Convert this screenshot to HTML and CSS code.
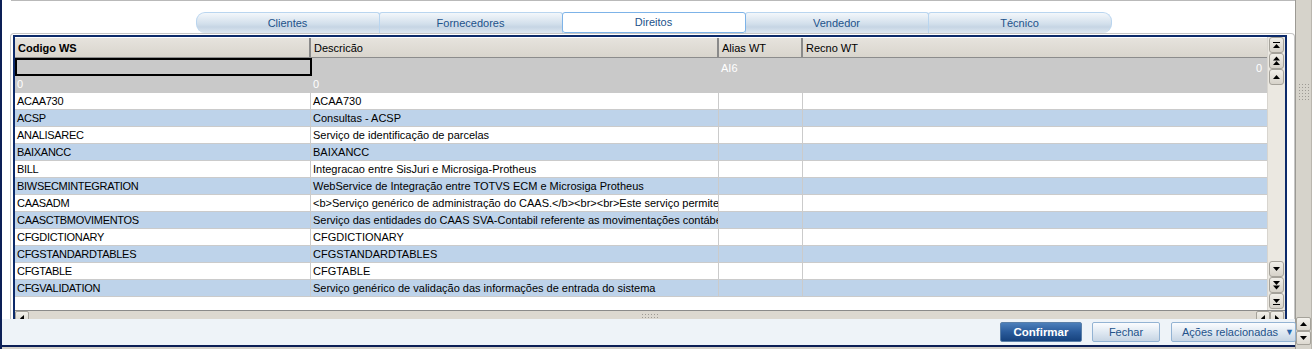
FILE: index.html
```html
<!DOCTYPE html>
<html lang="pt">
<head>
    <meta charset="UTF-8">
    <title>Direitos</title>
    <link rel="stylesheet" href="styles.css">
</head>
<body>
    <div class="window">
        <div class="main">
            <div class="workspace">
                <div class="topline"></div>
                <div class="tabs">
                    <div class="tab tab-first">Clientes</div>
                    <div class="tab">Fornecedores</div>
                    <div class="tab tab-active">Direitos</div>
                    <div class="tab">Vendedor</div>
                    <div class="tab tab-last">Técnico</div>
                </div>

                <div class="panel">
                    <div class="grid">
                        <div class="grid-body">
                            <div class="table">
                                <div class="row head">
                                    <div class="cell"><strong>Codigo WS</strong></div>
                                    <div class="cell">Descricão</div>
                                    <div class="cell">Alias WT</div>
                                    <div class="cell">Recno WT</div>
                                </div>
                                <div class="row row-edit">
                                    <div class="cell cell-edit"></div>
                                    <div class="cell"></div>
                                    <div class="cell">AI6</div>
                                    <div class="cell num">0</div>
                                </div>
                                <div class="row row-total">
                                    <div class="cell">0</div>
                                    <div class="cell">0</div>
                                    <div class="cell"></div>
                                    <div class="cell"></div>
                                </div>

                                <div class="row"><div class="cell">ACAA730</div><div class="cell">ACAA730</div><div class="cell"></div><div class="cell"></div></div>
                                <div class="row odd"><div class="cell">ACSP</div><div class="cell">Consultas - ACSP</div><div class="cell"></div><div class="cell"></div></div>
                                <div class="row"><div class="cell">ANALISAREC</div><div class="cell">Serviço de identificação de parcelas</div><div class="cell"></div><div class="cell"></div></div>
                                <div class="row odd"><div class="cell">BAIXANCC</div><div class="cell">BAIXANCC</div><div class="cell"></div><div class="cell"></div></div>
                                <div class="row"><div class="cell">BILL</div><div class="cell">Integracao entre SisJuri e Microsiga-Protheus</div><div class="cell"></div><div class="cell"></div></div>
                                <div class="row odd"><div class="cell">BIWSECMINTEGRATION</div><div class="cell">WebService de Integração entre TOTVS ECM e Microsiga Protheus</div><div class="cell"></div><div class="cell"></div></div>
                                <div class="row"><div class="cell">CAASADM</div><div class="cell">&lt;b&gt;Serviço genérico de administração do CAAS.&lt;/b&gt;&lt;br&gt;&lt;br&gt;Este serviço permite a administração</div><div class="cell"></div><div class="cell"></div></div>
                                <div class="row odd"><div class="cell">CAASCTBMOVIMENTOS</div><div class="cell">Serviço das entidades do CAAS SVA-Contabil referente as movimentações contábeis</div><div class="cell"></div><div class="cell"></div></div>
                                <div class="row"><div class="cell">CFGDICTIONARY</div><div class="cell">CFGDICTIONARY</div><div class="cell"></div><div class="cell"></div></div>
                                <div class="row odd"><div class="cell">CFGSTANDARDTABLES</div><div class="cell">CFGSTANDARDTABLES</div><div class="cell"></div><div class="cell"></div></div>
                                <div class="row"><div class="cell">CFGTABLE</div><div class="cell">CFGTABLE</div><div class="cell"></div><div class="cell"></div></div>
                                <div class="row odd"><div class="cell">CFGVALIDATION</div><div class="cell">Serviço genérico de validação das informações de entrada do sistema</div><div class="cell"></div><div class="cell"></div></div>
                            </div>

                            <div class="vscroll">
                                <div class="scroll-group">
                                    <div class="sbtn"><svg width="9" height="9" viewBox="0 0 9 9"><rect x="1" y="1" width="7" height="1"/><path d="M4.5 3 L8 7 L1 7 Z"/></svg></div>
                                    <div class="sbtn"><svg width="9" height="10" viewBox="0 0 9 10"><path d="M4.5 0.5 L8 4.5 L1 4.5 Z"/><path d="M4.5 5 L8 9 L1 9 Z"/></svg></div>
                                    <div class="sbtn"><svg width="9" height="6" viewBox="0 0 9 6"><path d="M4.5 1 L8 5 L1 5 Z"/></svg></div>
                                </div>
                                <div class="scroll-group">
                                    <div class="sbtn"><svg width="9" height="6" viewBox="0 0 9 6"><path d="M1 1 L8 1 L4.5 5 Z"/></svg></div>
                                    <div class="sbtn"><svg width="9" height="10" viewBox="0 0 9 10"><path d="M1 1 L8 1 L4.5 5 Z"/><path d="M1 5.5 L8 5.5 L4.5 9.5 Z"/></svg></div>
                                    <div class="sbtn"><svg width="9" height="9" viewBox="0 0 9 9"><path d="M1 2 L8 2 L4.5 6 Z"/><rect x="1" y="7" width="7" height="1"/></svg></div>
                                </div>
                            </div>
                        </div>

                        <div class="hscroll">
                            <div class="hbtn"><svg width="6" height="9" viewBox="0 0 6 9"><path d="M5 1 L5 8 L1 4.5 Z"/></svg></div>
                            <div class="grip grip-h"></div>
                            <div class="hbtn-pair">
                                <div class="hbtn"><svg width="6" height="9" viewBox="0 0 6 9"><path d="M5 1 L5 8 L1 4.5 Z"/></svg></div>
                                <div class="hbtn"><svg width="6" height="9" viewBox="0 0 6 9"><path d="M1 1 L1 8 L5 4.5 Z"/></svg></div>
                            </div>
                        </div>
                    </div>
                </div>
            </div>

            <div class="actions">
                <button class="btn btn-primary">Confirmar</button>
                <button class="btn btn-close">Fechar</button>
                <button class="btn btn-menu">Ações relacionadas <span class="caret">&#9660;</span></button>
            </div>
            <div class="status"></div>
        </div>

        <div class="sidebar">
            <div class="grip grip-v"></div>
            <div class="side-buttons">
                <div class="side-btn"><svg width="9" height="6" viewBox="0 0 9 6"><path d="M4.5 1 L8 5 L1 5 Z"/></svg></div>
                <div class="side-btn"><svg width="9" height="6" viewBox="0 0 9 6"><path d="M1 1 L8 1 L4.5 5 Z"/></svg></div>
            </div>
        </div>
    </div>
</body>
</html>
```

FILE: styles.css
```css
* {
    margin: 0;
    padding: 0;
    box-sizing: border-box;
    font-family: 'Liberation Sans', Arial, sans-serif;
}

body {
    width: 1312px;
    height: 349px;
    overflow: hidden;
    background: #ffffff;
    font-size: 11px;
    color: #000;
}

.window {
    display: flex;
    height: 349px;
}

.main {
    width: 1295px;
    border-left: 2px solid #0c1f56;
    display: flex;
    flex-direction: column;
}

.workspace {
    height: 319px;
    overflow: hidden;
}

.topline {
    margin-left: 9px;
    border-top: 1px solid #b9b9b9;
}

/* tabs */

.tabs {
    display: flex;
    justify-content: center;
    margin-top: 11px;
    padding-left: 11px;
}

.tab {
    width: 184px;
    height: 21px;
    line-height: 20px;
    text-align: center;
    color: #22528a;
    border: 1px solid #b9d5ef;
    border-bottom: none;
    border-radius: 3px 3px 0 0;
    background: linear-gradient(#f3f7fb, #d2dfeb 55%, #c6d5e4 70%, #dde7f1);
    margin-left: -1px;
}

.tab-first {
    border-radius: 9px 3px 0 9px;
}

.tab-last {
    border-radius: 3px 9px 9px 0;
}

.tab-active {
    background: #ffffff;
    border: 1px solid #7db3e8;
    border-radius: 3px;
    position: relative;
    line-height: 18px;
}

/* panel + grid */

.panel {
    margin-left: 8px;
    border: 1px solid #c6c6c6;
    border-bottom: none;
    border-radius: 4px 4px 0 0;
    padding: 1px 6px 0 2px;
    height: 300px;
}

.grid {
    border: 2px solid #0c2a6a;
    border-bottom: none;
    width: 1274px;
}

.grid-body {
    display: flex;
    height: 273px;
}

.table {
    width: 1252px;
    background: #ffffff;
}

.row {
    display: grid;
    grid-template-columns: 296px 408px 84px 464px;
    height: 17px;
    line-height: 16px;
    border-bottom: 1px solid #cbcbcb;
    background: #ffffff;
}

.row.odd {
    background: #bed3ea;
}

.cell {
    padding-left: 2px;
    white-space: nowrap;
    overflow: hidden;
    border-right: 1px solid #cbcbcb;
}

.cell:first-child {
    letter-spacing: -0.3px;
}

.cell:last-child {
    border-right: none;
}

.head {
    height: 21px;
    line-height: 20px;
    background: linear-gradient(#e6e3dd, #d9d5cd);
    border-top: 1px solid #ffffff;
    border-bottom: 1px solid #8c8c8c;
}

.head .cell {
    border-right: 2px solid #8a8a8a;
    padding-left: 3px;
    letter-spacing: 0;
}

.head .cell:last-child {
    border-right: none;
}

.row-edit,
.row-total {
    background: #c9c9c9;
    border-bottom: none;
    color: #ffffff;
}

.row-edit {
    height: 18px;
    line-height: 20px;
}

.row-edit .cell,
.row-total .cell {
    border-right: none;
}

.row-edit .cell-edit {
    border: 2px solid #000;
    width: 297px;
}

.row-total {
    line-height: 17px;
}

.num {
    text-align: right;
    padding-right: 5px;
}

/* scrollbars */

.vscroll {
    width: 18px;
    background: #ebe8e1;
    border-left: 1px solid #d8d5cf;
    display: flex;
    flex-direction: column;
    justify-content: space-between;
    padding: 0 0 1px 1px;
}

.scroll-group {
    display: flex;
    flex-direction: column;
}

.sbtn {
    width: 15px;
    height: 16px;
    border: 1px solid #a5a29a;
    border-radius: 3px;
    background: linear-gradient(#f1efe9, #d6d2c9);
    display: flex;
    align-items: center;
    justify-content: center;
}

.sbtn svg,
.hbtn svg,
.side-btn svg {
    fill: #000;
}

.hscroll {
    height: 16px;
    background: #dcd8d0;
    border-top: 1px solid #8a8a8a;
    display: flex;
    align-items: flex-start;
    justify-content: space-between;
}

.hbtn {
    width: 14px;
    height: 14px;
    border: 1px solid #a5a29a;
    border-radius: 2px;
    background: linear-gradient(#f1efe9, #d6d2c9);
    display: flex;
    align-items: center;
    justify-content: center;
}

.hbtn-pair {
    display: flex;
    margin-right: 1px;
}

.grip {
    background-image: radial-gradient(circle, #9d9a94 0.7px, transparent 0.8px);
    background-size: 3px 3px;
}

.grip-h {
    width: 19px;
    height: 6px;
    margin-top: 2px;
    margin-left: 16px;
}

/* action bar */

.actions {
    height: 26px;
    background: #eef3f8;
    display: flex;
    justify-content: flex-end;
    align-items: flex-start;
    padding-top: 3px;
    margin-right: -1px;
}

.btn {
    height: 20px;
    border: 1px solid #93b3d3;
    border-radius: 2px;
    background: linear-gradient(#fbfcfe, #e0e9f2 50%, #c7d5e4);
    color: #23528a;
    font-size: 11px;
}

.btn-primary {
    width: 82px;
    background: linear-gradient(#4c7fbb, #2a5b9b 50%, #16427d);
    border-color: #5a7fa8;
    color: #ffffff;
    font-weight: bold;
    font-size: 11.5px;
}

.btn-close {
    width: 68px;
    margin-left: 10px;
}

.btn-menu {
    width: 125px;
    margin-left: 11px;
    text-align: left;
    padding-left: 10px;
    position: relative;
}

.caret {
    position: absolute;
    right: 1px;
    top: 4px;
    font-size: 9px;
    color: #2b66ab;
}

.status {
    height: 4px;
    border-top: 2px solid #0c1f56;
    background: #d4d0c8;
}

/* right side bar */

.sidebar {
    width: 17px;
    background: #d6d3cb;
    border-left: 1px solid #9c9a94;
    border-right: 1px solid #b9b6ae;
    display: flex;
    flex-direction: column;
    align-items: center;
}

.grip-v {
    width: 12px;
    height: 18px;
    margin-top: 83px;
}

.side-buttons {
    margin-top: auto;
    margin-bottom: 4px;
    display: flex;
    flex-direction: column;
}

.side-btn {
    width: 15px;
    height: 14px;
    border: 1px solid #a5a29a;
    border-radius: 2px;
    background: linear-gradient(#f4f2ed, #dcd8d0);
    display: flex;
    align-items: center;
    justify-content: center;
}
```
